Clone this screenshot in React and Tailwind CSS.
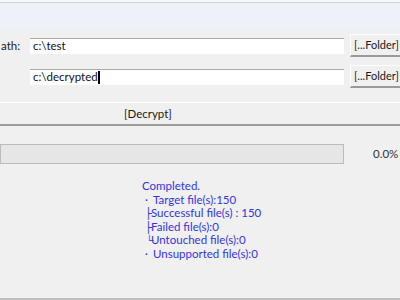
import React from "react";

const FolderButton = () => (
  <div className="ml-[6px] h-[23px] w-[60px] shrink-0 flex items-center pl-[3px] bg-[#f0f0f0] border-t border-l border-[#fdfdfd] border-b-2 border-b-[#9a9a9a] text-[11px] text-[#1a1a1a]">
    [...Folder]
  </div>
);

const PathInput = ({ value, caret }) => (
  <div className="w-[314px] h-[16px] shrink-0 bg-white border-t border-t-[#a9a9a9] flex items-center pl-[3px] text-[11.5px] text-[#111]">
    <span>{value}</span>
    {caret && <span className="w-[2px] h-[13px] bg-black" />}
  </div>
);

const lines = [
  ["", "Completed."],
  ["·", "Target file(s):150"],
  ["├", "Successful file(s) : 150"],
  ["├", "Failed file(s):0"],
  ["└", "Untouched file(s):0"],
  ["·", "Unsupported file(s):0"],
];

export default function App() {
  return (
    <div
      className="w-[400px] h-[300px] bg-[#f0f0f0] overflow-hidden flex flex-col"
      style={{ fontFamily: 'Lato, "Noto Sans", "DejaVu Sans", sans-serif' }}
    >
      <div className="h-[2px] bg-[#f9f9f9]" />
      <div className="h-[27px] bg-[#eef2f8] border-t border-[#cfd4da]" />

      <div className="mt-[5px] h-[23px] flex items-center">
        <div className="w-[30px] shrink-0 text-[11.5px] text-[#1a1a1a] pl-[1px]">ath:</div>
        <PathInput value="c:\test" />
        <FolderButton />
      </div>

      <div className="mt-[8px] h-[23px] flex items-center">
        <div className="w-[30px] shrink-0" />
        <PathInput value="c:\decrypted" caret />
        <FolderButton />
      </div>

      <div className="mt-[14px] h-[24px] border-t border-white border-b-2 border-b-[#9d9d9d] flex items-center pl-[124px] text-[11.5px] text-[#1a1a1a]">
        [Decrypt]
      </div>

      <div className="mt-[18px] h-[20px] flex items-center">
        <div className="w-[344px] h-[20px] bg-[#e6e6e6] border border-[#bcbcbc]" />
        <div className="ml-[29px] text-[11.5px] text-[#333]">0.0%</div>
      </div>

      <div className="mt-[15px] pl-[142px] text-[11.5px] text-[#3535d6]">
        {lines.map(([mark, text], i) => (
          <div key={i} className="h-[13.5px] leading-[13.5px] flex items-center overflow-visible">
            {i > 0 && (
              <span className="w-[9px] shrink-0 pl-[3px] text-[11px] leading-[13.5px]">{mark}</span>
            )}
            <span className={mark === "·" ? "pl-[2px]" : ""}>{text}</span>
          </div>
        ))}
      </div>

      <div className="flex-1" />
      <div className="h-[2px] bg-[#bdbdbd]" />
    </div>
  );
}
